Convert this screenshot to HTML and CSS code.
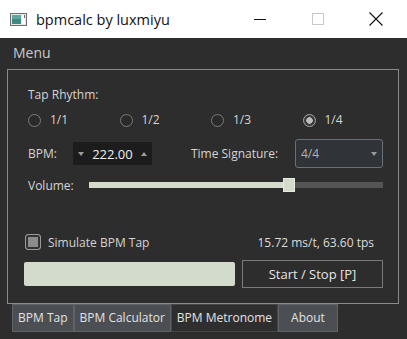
FILE: index.html
```html
<!DOCTYPE html>
<html lang="en">
<head>
    <meta charset="UTF-8">
    <title>bpmcalc by luxmiyu</title>
    <link rel="stylesheet" href="styles.css">
</head>
<body>
    <div class="titlebar">
        <svg class="app-icon" width="17" height="13" viewBox="0 0 17 13">
            <rect x="0.5" y="0.5" width="16" height="12" fill="#e8e8e8" stroke="#6d6d6d"/>
            <rect x="2" y="2" width="9" height="9" fill="#3f8a80"/>
            <rect x="2" y="2" width="9" height="4" fill="#5fa79c"/>
            <rect x="12" y="2" width="3" height="9" fill="#ffffff"/>
            <rect x="14" y="2" width="1" height="3" fill="#6d6d6d"/>
        </svg>
        <span class="title">bpmcalc by luxmiyu</span>
        <div class="caption">
            <div class="cap-btn"><span class="cap-min"></span></div>
            <div class="cap-btn"><span class="cap-max"></span></div>
            <div class="cap-btn">
                <svg width="14" height="14" viewBox="0 0 14 14">
                    <path d="M0.5 0.5 L13.5 13.5 M13.5 0.5 L0.5 13.5" stroke="#111" stroke-width="1.1"/>
                </svg>
            </div>
        </div>
    </div>

    <div class="menubar">Menu</div>

    <section class="panel">
        <div class="heading">Tap Rhythm:</div>

        <div class="radios">
            <label class="radio"><span class="dot"></span>1/1</label>
            <label class="radio"><span class="dot"></span>1/2</label>
            <label class="radio"><span class="dot"></span>1/3</label>
            <label class="radio"><span class="dot checked"></span>1/4</label>
        </div>

        <div class="bpm-row">
            <span class="field-label">BPM:</span>
            <div class="spinbox">
                <span class="arrow-down"></span>
                <span class="spin-value">222.00</span>
                <span class="arrow-up"></span>
            </div>
            <span class="sig-label">Time Signature:</span>
            <div class="combo">
                <span>4/4</span>
                <span class="arrow-down combo-arrow"></span>
            </div>
        </div>

        <div class="volume-row">
            <span class="field-label">Volume:</span>
            <div class="slider">
                <div class="slider-fill" style="width: 67%"></div>
                <div class="slider-handle" style="left: 67%"></div>
            </div>
        </div>

        <div class="check-row">
            <label class="check"><span class="box"></span>Simulate BPM Tap</label>
            <span class="stats">15.72 ms/t, 63.60 tps</span>
        </div>

        <div class="action-row">
            <div class="progress"></div>
            <button class="start-btn">Start / Stop [P]</button>
        </div>
    </section>

    <nav class="tabs">
        <div class="tab">BPM Tap</div>
        <div class="tab">BPM Calculator</div>
        <div class="tab active">BPM Metronome</div>
        <div class="tab about">About</div>
    </nav>
</body>
</html>
```

FILE: styles.css
```css
body {
    margin: 0;
    width: 407px;
    height: 339px;
    overflow: hidden;
    background-color: #2d2d2d;
    font-family: "Open Sans", "Noto Sans", sans-serif;
    font-size: 12px;
    color: #d4d4d4;
}

/* window title bar */
.titlebar {
    height: 38px;
    background: #ffffff;
    display: flex;
    align-items: center;
}
.app-icon {
    margin-left: 10px;
}
.title {
    margin-left: 9px;
    font-size: 14.5px;
    color: #111;
}
.caption {
    margin-left: auto;
    margin-right: 2px;
    display: flex;
    height: 38px;
}
.cap-btn {
    width: 58px;
    display: flex;
    align-items: center;
    justify-content: center;
}
.cap-min {
    width: 12px;
    height: 1px;
    background: #111;
}
.cap-max {
    width: 10px;
    height: 10px;
    border: 1px solid #c8c8c8;
}

.menubar {
    height: 31px;
    line-height: 29px;
    padding-left: 13px;
    font-size: 14px;
    color: #c9c9c9;
}

/* main group box */
.panel {
    box-sizing: border-box;
    margin-left: 7px;
    width: 392px;
    height: 235px;
    border: 1px solid #8a8a8a;
    padding: 15px 15px 0 16px;
}
.heading {
    margin-left: 4px;
    line-height: 20px;
}
.radios {
    margin: 5px 0 0 4px;
    display: grid;
    grid-template-columns: repeat(4, 91.5px);
    line-height: 20px;
}
.radio {
    display: flex;
    align-items: center;
}
.dot {
    box-sizing: border-box;
    width: 13px;
    height: 13px;
    border: 1px solid #7d7d7d;
    border-radius: 50%;
    background: #2a2a2a;
    margin-right: 9px;
}
.dot.checked {
    border-color: #a8a8a8;
    background: radial-gradient(circle, #bdbdbd 0 3px, #3a3a3a 3.5px);
}

.bpm-row {
    margin-top: 9px;
    height: 29px;
    display: flex;
    align-items: center;
}
.field-label {
    margin-left: 4px;
}
.spinbox {
    margin-left: 16px;
    width: 79px;
    height: 23px;
    background: #1c1c1c;
    display: flex;
    align-items: center;
    box-sizing: border-box;
    padding: 0 5px;
    color: #eeeeee;
    font-size: 13px;
}
.spin-value {
    margin: 0 auto;
}
.arrow-down, .arrow-up {
    width: 0;
    height: 0;
    border-left: 3px solid transparent;
    border-right: 3px solid transparent;
}
.arrow-down {
    border-top: 4px solid #9a9a9a;
}
.arrow-up {
    border-bottom: 4px solid #9a9a9a;
}
.sig-label {
    margin-left: 39px;
}
.combo {
    margin-left: auto;
    box-sizing: border-box;
    width: 88px;
    height: 29px;
    border: 1px solid #687079;
    border-radius: 3px;
    background: #303338;
    display: flex;
    align-items: center;
    padding: 0 5px 0 5px;
    color: #aeb2b6;
}
.combo-arrow {
    margin-left: auto;
}

.volume-row {
    margin-top: 9px;
    height: 16px;
    display: flex;
    align-items: center;
}
.slider {
    position: relative;
    margin-left: auto;
    width: 294px;
    height: 6px;
    background: #555555;
}
.slider-fill {
    height: 6px;
    background: #d4dbcb;
}
.slider-handle {
    position: absolute;
    top: -4px;
    margin-left: -3px;
    box-sizing: border-box;
    width: 12px;
    height: 14px;
    background: #d4dbcb;
    border: 1px solid #e6ebde;
}

.check-row {
    margin-top: 39px;
    height: 20px;
    display: flex;
    align-items: center;
}
.check {
    display: flex;
    align-items: center;
    margin-left: 1px;
}
.box {
    box-sizing: border-box;
    width: 16px;
    height: 16px;
    border: 1px solid #9a9a9a;
    border-radius: 3px;
    background: #8c8c8c;
    box-shadow: inset 0 0 0 2px #333;
    margin-right: 7px;
}
.stats {
    margin-left: auto;
    margin-right: 9px;
    color: #dcdcdc;
}

.action-row {
    margin-top: 8px;
    height: 28px;
    display: flex;
    align-items: center;
}
.progress {
    width: 211px;
    height: 24px;
    border-radius: 2px;
    background: #d3dbcd;
}
.start-btn {
    margin-left: auto;
    width: 141px;
    height: 28px;
    background: transparent;
    border: 1px solid #7a7a7a;
    color: #e6e6e6;
    font-family: inherit;
    font-size: 13px;
}

/* bottom tab strip */
.tabs {
    display: flex;
    margin-left: 12px;
}
.tab {
    box-sizing: border-box;
    height: 28px;
    line-height: 26px;
    padding: 0 5px;
    background: #4b4e53;
    border: 1px solid #5f6267;
    color: #e2e2e2;
    white-space: nowrap;
}
.tab.active {
    background: #2e2e2e;
    border-color: #464646;
}
.tab.about {
    padding: 0 12px;
}
```
